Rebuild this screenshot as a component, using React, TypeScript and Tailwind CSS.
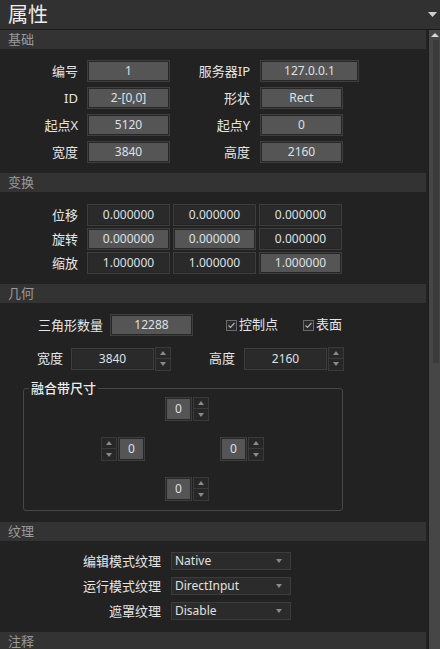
import React from 'react';

const FONT = { fontFamily: '"Noto Sans", "Noto Sans CJK SC", sans-serif' };

// text field with double border, light or dark fill
const Field = ({ value, w, light = false, h = 'h-[22px]' }: { value: string; w: string; light?: boolean; h?: string }) => (
  <div className={`${w} ${h} border border-[#3e3e3e] shrink-0`}>
    <div
      className={`w-full h-full border border-[#272727] flex items-center justify-center text-[12px] text-[#dde0e6] ${
        light ? 'bg-[#555555]' : 'bg-[#2a2a2a]'
      }`}
    >
      {value}
    </div>
  </div>
);

const Tri = ({ up }: { up?: boolean }) => (
  <svg width="6" height="4" viewBox="0 0 6 4">
    <path d={up ? 'M0 4 L3 0 L6 4 Z' : 'M0 0 L3 4 L6 0 Z'} fill="#8a8a8a" />
  </svg>
);

const Arrows = ({ h = 'h-[12px]' }: { h?: string }) => (
  <div className="flex flex-col w-[16px] shrink-0">
    <div className={`${h} border border-[#3a3a3a] bg-[#272727] flex items-center justify-center`}>
      <Tri up />
    </div>
    <div className={`${h} border border-[#3a3a3a] border-t-0 bg-[#272727] flex items-center justify-center`}>
      <Tri />
    </div>
  </div>
);

const Spin = ({ value, left = false }: { value: string; left?: boolean }) => (
  <div className="flex items-start gap-[1px]">
    {left && <Arrows />}
    <Field value={value} w="w-[27px]" h="h-[24px]" light />
    {!left && <Arrows />}
  </div>
);

const Header = ({ title }: { title: string }) => (
  <div className="h-[19px] mr-[2px] bg-[#333333] pl-[8px] flex items-center text-[13px] text-[#9a9a9a]">{title}</div>
);

const Label = ({ text, w }: { text: string; w: string }) => (
  <div className={`${w} shrink-0 text-right text-[13px] text-[#e6e6e6] leading-none`}>{text}</div>
);

const Check = ({ text }: { text: string }) => (
  <div className="flex items-center gap-[2px] text-[13px] text-[#e6e6e6]">
    <svg width="11" height="11" viewBox="0 0 11 11">
      <rect x="0.5" y="0.5" width="10" height="10" fill="#2a2a2a" stroke="#6a6a6a" />
      <path d="M2.5 5.5 L4.5 7.5 L8.5 3" stroke="#b0b0b0" strokeWidth="1.2" fill="none" />
    </svg>
    {text}
  </div>
);

const Combo = ({ value }: { value: string }) => (
  <div className="w-[120px] h-[18px] bg-[#2b2b2b] border border-[#3c3c3c] flex items-center pl-[3px] pr-[8px] text-[12px] text-[#e0e0e0]">
    <span className="flex-1">{value}</span>
    <Tri />
  </div>
);

export default function App() {
  return (
    <div className="w-[440px] h-[649px] bg-[#222222] overflow-hidden flex flex-col" style={FONT}>
      {/* title bar */}
      <div className="h-[30px] shrink-0 bg-[#313131] border-b border-[#1b1b1b] flex items-center pl-[8px] pr-[3px]">
        <span className="flex-1 text-[20px] text-[#eeeeee] leading-none">属性</span>
        <svg width="9" height="5" viewBox="0 0 9 5">
          <path d="M0 0 L4.5 5 L9 0 Z" fill="#d0d0d0" />
        </svg>
      </div>

      <div className="flex flex-1 min-h-0">
        <div className="flex-1 flex flex-col">
          <Header title="基础" />
          <div className="pt-[11px] pb-[10px] flex flex-col gap-[5px]">
            {[
              ['编号', '1', '服务器IP', '127.0.0.1', 'w-[99px]'],
              ['ID', '2-[0,0]', '形状', 'Rect', 'w-[83px]'],
              ['起点X', '5120', '起点Y', '0', 'w-[83px]'],
              ['宽度', '3840', '高度', '2160', 'w-[83px]'],
            ].map(([a, av, b, bv, bw]) => (
              <div key={a} className="flex items-center h-[22px]">
                <Label text={a} w="w-[78px]" />
                <div className="w-[9px]" />
                <Field value={av} w="w-[83px]" light />
                <Label text={b} w="w-[80px]" />
                <div className="w-[10px]" />
                <Field value={bv} w={bw} light />
              </div>
            ))}
          </div>

          <Header title="变换" />
          <div className="pt-[12px] pb-[10px] flex flex-col gap-[2px]">
            {[
              ['位移', '0.000000', [false, false, false]],
              ['旋转', '0.000000', [true, true, false]],
              ['缩放', '1.000000', [false, false, true]],
            ].map(([l, v, lights]) => (
              <div key={l as string} className="flex items-center h-[22px]">
                <Label text={l as string} w="w-[78px]" />
                <div className="w-[9px]" />
                <div className="flex gap-[3px]">
                  {(lights as boolean[]).map((li, i) => (
                    <Field key={i} value={v as string} w="w-[83px]" light={li} />
                  ))}
                </div>
              </div>
            ))}
          </div>

          <Header title="几何" />
          <div className="pt-[11px] pb-[11px] flex flex-col">
            <div className="flex items-center h-[22px]">
              <Label text="三角形数量" w="w-[103px]" />
              <div className="w-[7px]" />
              <Field value="12288" w="w-[83px]" light />
              <div className="w-[33px]" />
              <Check text="控制点" />
              <div className="w-[25px]" />
              <Check text="表面" />
            </div>
            <div className="flex items-center h-[23px] mt-[11px]">
              <Label text="宽度" w="w-[63px]" />
              <div className="w-[8px]" />
              <Field value="3840" w="w-[83px]" />
              <div className="w-[1px]" />
              <Arrows />
              <Label text="高度" w="w-[64px]" />
              <div className="w-[9px]" />
              <Field value="2160" w="w-[83px]" />
              <div className="w-[1px]" />
              <Arrows />
            </div>

            {/* group box */}
            <div className="relative ml-[23px] mt-[18px] w-[320px] h-[123px] border border-[#474747] rounded-[3px]">
              <div className="absolute -top-[9px] left-[5px] px-[2px] bg-[#222222] text-[13px] font-medium text-[#eeeeee] leading-[16px]">
                融合带尺寸
              </div>
              <div className="flex flex-col gap-[16px] pt-[8px]">
                <div className="pl-[141px]">
                  <Spin value="0" />
                </div>
                <div className="flex pl-[77px]">
                  <Spin value="0" left />
                  <div className="w-[75px]" />
                  <Spin value="0" />
                </div>
                <div className="pl-[141px]">
                  <Spin value="0" />
                </div>
              </div>
            </div>
          </div>

          <Header title="纹理" />
          <div className="pt-[11px] pb-[12px] flex flex-col gap-[7px]">
            {[
              ['编辑模式纹理', 'Native'],
              ['运行模式纹理', 'DirectInput'],
              ['遮罩纹理', 'Disable'],
            ].map(([l, v]) => (
              <div key={l} className="flex items-center h-[18px]">
                <Label text={l} w="w-[161px]" />
                <div className="w-[10px]" />
                <Combo value={v} />
              </div>
            ))}
          </div>

          <Header title="注释" />
        </div>

        {/* scrollbar */}
        <div className="w-[12px] shrink-0 bg-[#464646] flex flex-col items-center pt-[3px] border-l border-[#1e1e1e]">
          <svg width="8" height="4" viewBox="0 0 8 4">
            <path d="M0 4 L4 0 L8 4 Z" fill="#d8d8d8" />
          </svg>
          <div className="mt-[3px] ml-[3px] w-[6px] h-[323px] bg-[#3b3b3b]" />
        </div>
      </div>
    </div>
  );
}
